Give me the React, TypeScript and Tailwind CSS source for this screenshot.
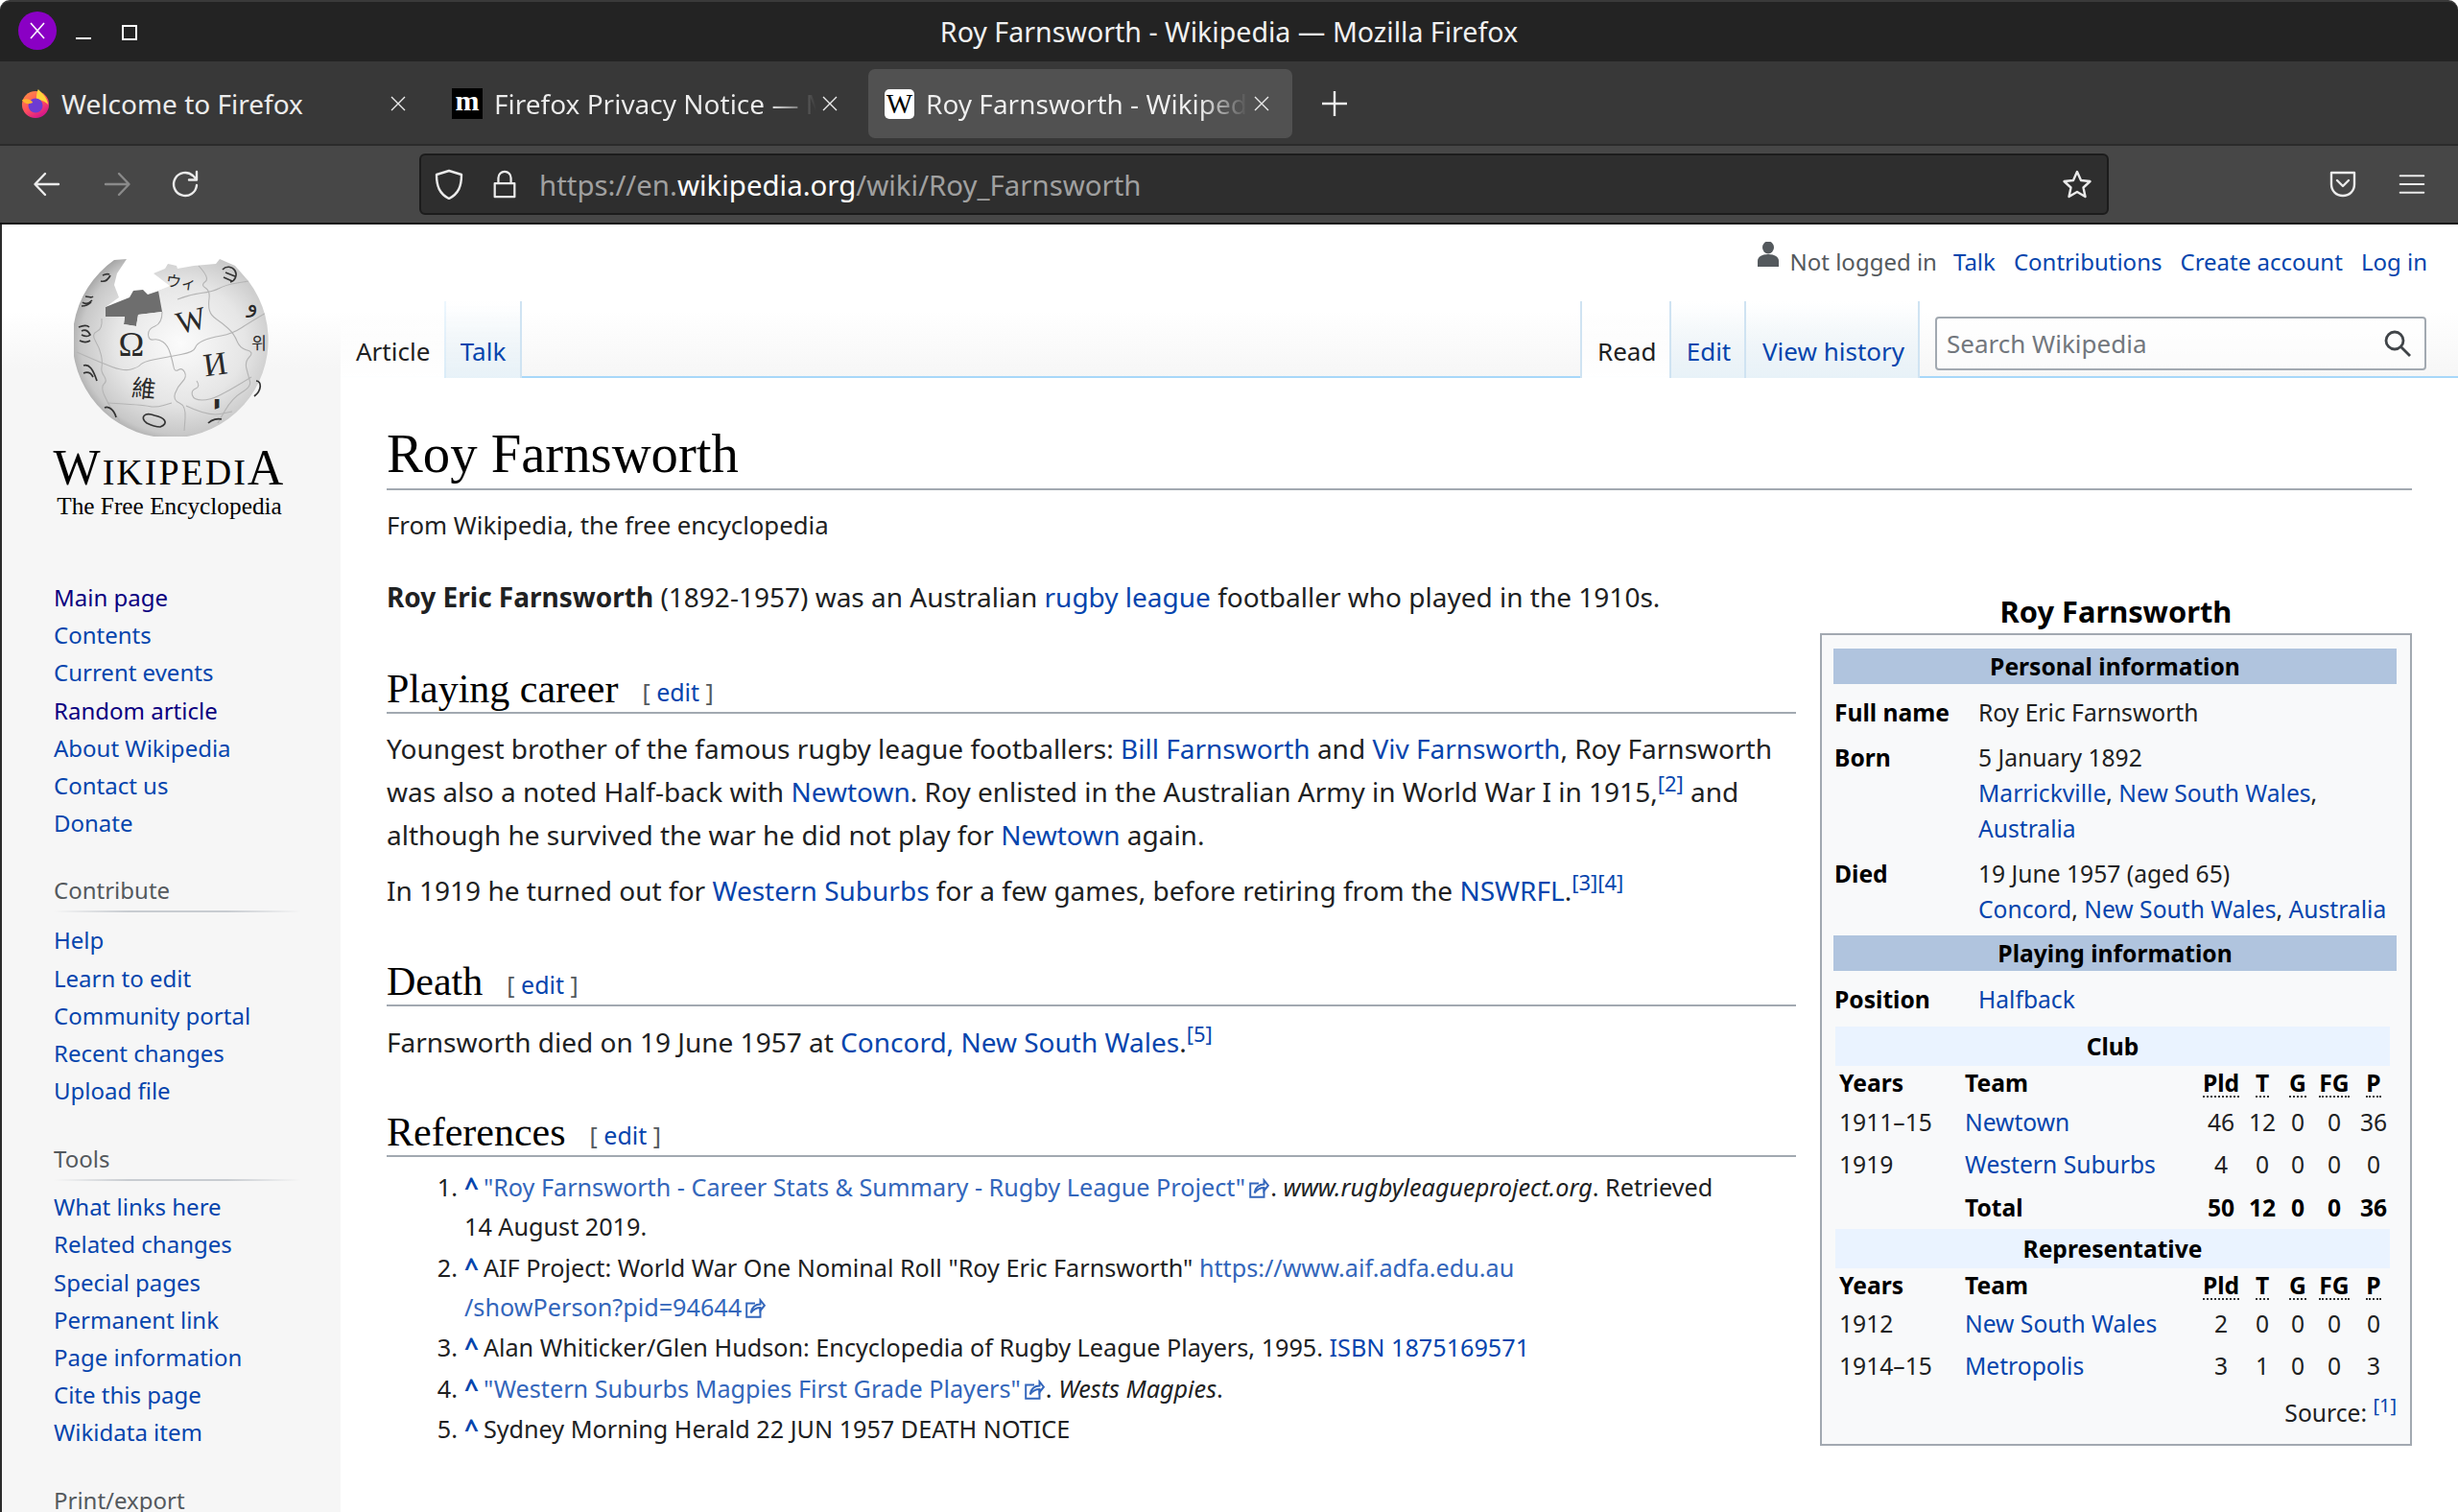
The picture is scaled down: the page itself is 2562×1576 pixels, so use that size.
import type { ReactNode } from "react"

const navA = ["Main page", "Contents", "Current events", "Random article", "About Wikipedia", "Contact us", "Donate"]
const navB = ["Help", "Learn to edit", "Community portal", "Recent changes", "Upload file"]
const navC = ["What links here", "Related changes", "Special pages", "Permanent link", "Page information", "Cite this page", "Wikidata item"]

const visited = ["Main page", "Random article"]

// seams of the puzzle pieces on the globe
const seams: number[][][] = [
  [[92, 56], [92, 68], [77, 74], [78, 86], [88, 84], [98, 91], [103, 108], [105, 119], [113, 114], [118, 124], [108, 134], [103, 148], [117, 154], [115, 180]],
  [[29, 63], [30, 74], [18, 79], [27, 94], [30, 109], [28, 118], [35, 128], [28, 134], [35, 151], [48, 170]],
  [[3, 98], [28, 109], [52, 118], [67, 114], [72, 108], [98, 103], [125, 98], [128, 89], [142, 83], [165, 79], [185, 66], [202, 56]],
  [[108, 43], [120, 38], [145, 35], [158, 28], [182, 24]],
  [[130, 8], [142, 21], [132, 28], [142, 34], [140, 50], [143, 60], [155, 68], [167, 79], [173, 94], [188, 98], [178, 108], [182, 123], [185, 134], [165, 146], [150, 172]],
  [[128, 128], [132, 134], [122, 138], [125, 148], [142, 148], [162, 138], [185, 124]],
  [[35, 151], [72, 153], [85, 156], [102, 151]],
  [[117, 154], [140, 165], [165, 160]],
]

function smooth(pts: number[][]) {
  let d = `M${pts[0][0]} ${pts[0][1]}`
  for (let i = 1; i < pts.length - 1; i++) {
    const mx = (pts[i][0] + pts[i + 1][0]) / 2
    const my = (pts[i][1] + pts[i + 1][1]) / 2
    d += `Q${pts[i][0]} ${pts[i][1]} ${mx} ${my}`
  }
  const last = pts[pts.length - 1]
  return d + `L${last[0]} ${last[1]}`
}

function A({ children }: { children: ReactNode }) {
  return <span className="text-[#0645ad]">{children}</span>
}

function Ext({ children }: { children: ReactNode }) {
  return <span className="text-[#3366bb]">{children}</span>
}

function ExtIcon() {
  return (
    <svg viewBox="0 0 20 20" className="inline-block w-[24px] h-[22px] ml-[2px] align-[-3px]" fill="none" stroke="#3366bb" strokeWidth="1.8">
      <path d="M10 5H2v13h13v-8" />
      <path d="M6 14c1-5 4-8 9-8V2l4 5-4 5V9c-3 0-6 1-9 5z" fill="#fff" />
    </svg>
  )
}

function Heading({ title, mt }: { title: string; mt: string }) {
  return (
    <div className={`${mt} h-[54px] border-b-2 border-[#a2a9b1] flex items-end font-['Liberation_Serif',serif]`}>
      <span className="text-[42px] leading-[48px] text-black">{title}</span>
      <span className="ml-[25px] mb-[-2px] text-[25px] leading-[46px] text-[#54595d] font-['Noto_Sans',sans-serif]">
        [ <A>edit</A> ]
      </span>
    </div>
  )
}

function NavList({ items }: { items: string[] }) {
  return (
    <ul>
      {items.map((t) => (
        <li key={t} className={`h-[39.2px] leading-[39.2px] text-[24px] ${visited.includes(t) ? "text-[#0b0080]" : "text-[#0645ad]"}`}>
          {t}
        </li>
      ))}
    </ul>
  )
}

function NavHead({ title }: { title: string }) {
  return (
    <div className="w-[258px] h-[41px] text-[24px] leading-[36px] text-[#54595d] bg-[linear-gradient(to_right,#c8ccd100,#c8ccd1_30%,#c8ccd1_70%,#c8ccd100)] bg-[length:100%_2px] bg-no-repeat bg-bottom">
      {title}
    </div>
  )
}

function Globe() {
  const outline =
    "M152 1L168 8L182 24A102 102 0 1 1 42 2L55 1L45 16L42 28L47 41L33 51L33 61L53 61L52 69L65 71L67 59L92 56L88 34L100 29L83 16L95 11L98 6L107 8L108 11L125 8L148 6Z"
  return (
    <svg viewBox="0 0 204 186" className="w-[204px] h-[186px] block">
      <defs>
        <radialGradient id="sphere" cx="0.55" cy="0.47" r="0.6">
          <stop offset="0" stopColor="#fbfbfb" />
          <stop offset="0.55" stopColor="#e6e6e6" />
          <stop offset="0.85" stopColor="#c8c8c8" />
          <stop offset="1" stopColor="#969696" />
        </radialGradient>
        <clipPath id="ball">
          <path d={outline} />
        </clipPath>
      </defs>
      <path d="M33 51L58 41L62 34L72 33L77 38L98 31L100 36L92 56L67 59L65 71L52 69L53 61L33 61Z" fill="#6e6e6e" />
      <path d={outline} fill="url(#sphere)" />
      <g clipPath="url(#ball)" fill="none" stroke="#b4b4b4" strokeWidth="1.1">
        {seams.map((s, i) => (
          <path key={i} d={smooth(s)} />
        ))}
      </g>
      <g fill="#2a2a2a">
        <text x="60" y="102" textAnchor="middle" className="font-['Liberation_Serif',serif]" fontSize="36">Ω</text>
        <text x="122" y="76" textAnchor="middle" transform="rotate(-14 122 64)" className="font-['Liberation_Serif',serif]" fontSize="33">W</text>
        <text x="147" y="122" textAnchor="middle" transform="rotate(-8 147 108)" className="font-['Liberation_Serif',serif]" fontSize="34">И</text>
        <text x="73" y="145" textAnchor="middle" transform="rotate(6 73 134)" className="font-['Noto_Sans_CJK_TC',sans-serif]" fontSize="25">維</text>
        <text x="112" y="31" textAnchor="middle" transform="rotate(8 112 24)" className="font-['Noto_Sans_CJK_JP',sans-serif]" fontSize="16">ウィ</text>
        <text x="193" y="95" textAnchor="middle" className="font-['Noto_Sans_CJK_KR',sans-serif]" fontSize="17">위</text>
        <text x="186" y="56" textAnchor="middle" className="font-['DejaVu_Sans',sans-serif]" fontSize="24">و</text>
        <text x="149" y="162" textAnchor="middle" className="font-['DejaVu_Sans',sans-serif]" fontWeight="700" fontSize="28">י</text>
      </g>
      <g fill="none" stroke="#333" strokeWidth="1.7">
        <path d="M155 12a8 8 0 1 1 8 13M158 15l10 4M156 20l9 4" />
        <path d="M38 18c-3 6-6 7-10 6M30 18c4-2 5-2 7-1" />
        <path d="M19 44c-4 4-8 4-10 2M12 40c4 0 6 2 8 0M8 50c4 0 8-2 10-4" />
        <path d="M5 72c5-2 9-2 11 0M8 80c4 2 7 2 9 0c-2-4-5-6-9-4M6 86c4 2 8 2 11 0" />
        <path d="M10 112c6-2 10 4 14 16M10 120c5-2 8 0 10 4" />
        <path d="M76 172c-8-6-2-12 8-8c10 2 16 8 6 12c-6 0-10-2-14-4z" />
        <path d="M32 156c4-2 10 2 12 10" />
        <path d="M190 128c6 0 6 10-2 16" />
        <path d="M140 172c4-4 10-5 14-4" />
      </g>
    </svg>
  )
}

function FirefoxIcon() {
  return (
    <svg viewBox="0 0 32 32" className="w-[30px] h-[32px]">
      <defs>
        <linearGradient id="ff" x1="0" y1="0" x2="0.6" y2="1">
          <stop offset="0" stopColor="#ff9640" />
          <stop offset="0.6" stopColor="#ff4f5e" />
          <stop offset="1" stopColor="#d6168c" />
        </linearGradient>
      </defs>
      <circle cx="16" cy="17" r="15" fill="url(#ff)" />
      <path d="M19 0c4 4 10 9 11 17c-3-3-9-6-13-4c0-5 0-9 2-13z" fill="#ffd43a" />
      <circle cx="16" cy="18" r="8" fill="#6d3bd2" />
      <path d="M1 12c5-2 10-1 12 3c-4 2-9 2-12-3z" fill="#ffb42e" />
    </svg>
  )
}

function ChromeIcon({ children, cls }: { children: ReactNode; cls: string }) {
  return (
    <svg viewBox="0 0 32 32" className={cls} fill="none" stroke="currentColor" strokeWidth="2.4" strokeLinecap="round" strokeLinejoin="round">
      {children}
    </svg>
  )
}

function SubHead({ title }: { title: string }) {
  return (
    <div className="w-[578px] ml-[2px] h-[41px] leading-[41px] bg-[#eaf3ff] text-center font-bold text-black">{title}</div>
  )
}

const statCols = "grid grid-cols-[131px_243px_54px_32px_42px_34px_48px] ml-[3px] w-[584px]"

function StatHead() {
  return (
    <div className={`${statCols} h-[36px] leading-[36px] font-bold text-black`}>
      <div className="pl-[3px]">Years</div>
      <div className="pl-[3px]">Team</div>
      {["Pld", "T", "G", "FG", "P"].map((h) => (
        <div key={h} className="text-center">
          <span className="inline-block leading-[26px] border-b-2 border-dotted border-[#333]">{h}</span>
        </div>
      ))}
    </div>
  )
}

function StatRow({ cells, h, bold }: { cells: string[]; h: string; bold?: boolean }) {
  return (
    <div className={`${statCols} ${h} items-center ${bold ? "font-bold text-black" : "text-[#202122]"}`}>
      <div className="pl-[3px]">{cells[0]}</div>
      <div className="pl-[3px] whitespace-nowrap">{bold ? cells[1] : <A>{cells[1]}</A>}</div>
      {cells.slice(2).map((c, i) => (
        <div key={i} className="text-center">{c}</div>
      ))}
    </div>
  )
}

function Caret() {
  return <span className="font-bold text-[#0645ad] mr-[5px] text-[26px] leading-none">^</span>
}

function Ref({ n, children }: { n: number; children: ReactNode }) {
  return (
    <li className="flex mb-[1.5px]">
      <span className="w-[74px] text-right shrink-0 pr-0">{n}.</span>
      <div className="ml-[7px]">{children}</div>
    </li>
  )
}

export default function App() {
  return (
    <div className="w-[2562px] h-[1576px] overflow-hidden flex flex-col bg-white font-['Noto_Sans',sans-serif] text-[#202122]">
      {/* window title */}
      <div className="h-[64px] shrink-0 bg-[#232323] border-t-2 border-[#3a3a3a] rounded-t-[10px] relative flex items-center">
        <div className="ml-[19px] mt-[-2px] w-[40px] h-[40px] rounded-full bg-[#8a00c4] flex items-center justify-center">
          <svg viewBox="0 0 20 20" className="w-[20px] h-[20px]" stroke="#fff" strokeWidth="1.6"><path d="M3 2l14 16M17 2L3 18" /></svg>
        </div>
        <div className="ml-[20px] mt-[14px] w-[16px] h-[2px] bg-white" />
        <div className="ml-[32px] mt-[2px] w-[16px] h-[16px] border-2 border-white" />
        <div className="absolute inset-x-0 top-0 h-full flex items-center justify-center text-[28.6px] text-[#f1f1f1]">
          Roy Farnsworth - Wikipedia — Mozilla Firefox
        </div>
      </div>

      {/* tabs */}
      <div className="h-[88px] shrink-0 pt-[2px] bg-[#383838] border-b-2 border-[#2b2b2b] flex items-center text-[28px] text-[#ececec]">
        <div className="w-[450px] h-[72px] pl-[22px] pr-[27px] flex items-center">
          <FirefoxIcon />
          <span className="ml-[12px] flex-1">Welcome to Firefox</span>
          <svg viewBox="0 0 16 16" className="w-[16px] h-[16px]" stroke="#ececec" strokeWidth="1.4"><path d="M1 1l14 14M15 1L1 15" /></svg>
        </div>
        <div className="w-[444px] h-[72px] pl-[21px] pr-[21px] flex items-center">
          <div className="w-[32px] h-[32px] bg-black text-white flex items-center justify-center font-['Liberation_Serif',serif] font-bold text-[30px] leading-none pb-[6px]">m</div>
          <span className="ml-[12px] w-[336px] overflow-hidden whitespace-nowrap bg-[linear-gradient(to_right,#ececec_85%,#38383800)] bg-clip-text text-transparent">Firefox Privacy Notice — Mozilla</span>
          <svg viewBox="0 0 16 16" className="ml-[6px] w-[16px] h-[16px]" stroke="#ececec" strokeWidth="1.4"><path d="M1 1l14 14M15 1L1 15" /></svg>
        </div>
        <div className="ml-[11px] w-[442px] h-[72px] pl-[17px] pr-[22px] rounded-[7px] bg-[#515151] flex items-center">
          <div className="w-[31px] h-[31px] rounded-[5px] bg-white text-black flex items-center justify-center font-['Liberation_Serif',serif] text-[29px] leading-none">W</div>
          <span className="ml-[12px] w-[336px] overflow-hidden whitespace-nowrap bg-[linear-gradient(to_right,#f0f0f0_85%,#51515100)] bg-clip-text text-transparent">Roy Farnsworth - Wikipedia</span>
          <svg viewBox="0 0 16 16" className="ml-[6px] w-[16px] h-[16px]" stroke="#ececec" strokeWidth="1.4"><path d="M1 1l14 14M15 1L1 15" /></svg>
        </div>
        <svg viewBox="0 0 24 24" className="ml-[31px] w-[26px] h-[26px]" stroke="#f0f0f0" strokeWidth="2.2"><path d="M12 0v24M0 12h24" /></svg>
      </div>

      {/* toolbar */}
      <div className="h-[82px] shrink-0 bg-[#474747] border-b-2 border-[#111] flex items-center text-[#ebebeb]">
        <ChromeIcon cls="ml-[33px] w-[32px] h-[32px]">
          <path d="M28 16H4M14 5L3.500 16L14 27" />
        </ChromeIcon>
        <ChromeIcon cls="ml-[41px] w-[32px] h-[32px] text-[#8a8a8a]">
          <path d="M4 16h24M18 5l10.500 11L18 27" />
        </ChromeIcon>
        <ChromeIcon cls="ml-[40px] w-[32px] h-[32px]">
          <path d="M27 17a12 12 0 1 1-4-10l4 4M27 3v8.500h-8" />
        </ChromeIcon>
        <div className="ml-[227px] w-[1761px] h-[64px] rounded-[6px] bg-[#2e2e2e] border-2 border-[#1c1c1c] flex items-center">
          <ChromeIcon cls="ml-[13px] w-[32px] h-[32px]">
            <path d="M16 2l13 4c0 12-3 20-13 25C6 26 3 18 3 6z" />
          </ChromeIcon>
          <ChromeIcon cls="ml-[27px] w-[30px] h-[32px]">
            <path d="M9 15V9a7 7 0 0 1 14 0v6M5 15h22v15H5z" />
          </ChromeIcon>
          <div className="ml-[21px] pt-[2px] flex-1 text-[29.4px] text-[#a0a0a0]">
            https://en.<span className="text-white">wikipedia.org</span>/wiki/Roy_Farnsworth
          </div>
          <ChromeIcon cls="mr-[15px] w-[32px] h-[32px]">
            <path d="M16 3l4 9 9.500 1-7 6.500L24.500 29 16 24l-8.500 5 2-9.500-7-6.500 9.500-1z" />
          </ChromeIcon>
        </div>
        <ChromeIcon cls="ml-[228px] w-[32px] h-[32px]">
          <path d="M4 4h24v12c0 7-5 12-12 12S4 23 4 16zM10 12l6 6 6-6" />
        </ChromeIcon>
        <ChromeIcon cls="ml-[42px] w-[28px] h-[28px]">
          <path d="M2 6h28M2 16h28M2 26h28" />
        </ChromeIcon>
      </div>

      {/* page */}
      <div className="flex-1 flex min-h-0 border-l-2 border-[#2b2b2b] relative">
        {/* sidebar */}
        <aside className="w-[353px] shrink-0 bg-[linear-gradient(to_bottom,#ffffff_90px,#f6f6f6_150px)] pl-[54px] overflow-hidden">
          <div className="ml-[-54px] h-[306px] w-[353px] flex flex-col items-center">
            <div className="mt-[35px] self-start pl-[75px]"><Globe /></div>
            <div className="mt-[7px] ml-[-4px] font-['Liberation_Serif',serif] text-black leading-none whitespace-nowrap text-[38px] tracking-[2px]">
              <span className="text-[52px]">W</span>IKIPEDI<span className="text-[52px]">A</span>
            </div>
            <div className="mt-[-2px] ml-[-4px] font-['Liberation_Serif',serif] text-black text-[25.3px] leading-[30px] whitespace-nowrap">The Free Encyclopedia</div>
          </div>
          <div className="mt-[-4px]">
            <div className="h-[67px]" />
            <NavList items={navA} />
            <div className="mt-[33px]"><NavHead title="Contribute" /></div>
            <div className="mt-[9px]"><NavList items={navB} /></div>
            <div className="mt-[34px]"><NavHead title="Tools" /></div>
            <div className="mt-[7px]"><NavList items={navC} /></div>
            <div className="mt-[33px] text-[24px] leading-[36px] text-[#54595d]">Print/export</div>
          </div>
        </aside>

        {/* main */}
        <main className="flex-1 min-w-0 flex flex-col">
          <div className="h-[160px] shrink-0 bg-[linear-gradient(to_bottom,#ffffff_90px,#f6f6f6)] flex flex-col">
            <div className="pt-[21px] pr-[32px] flex justify-end items-center text-[24px] leading-[36px] text-[#0645ad] gap-[19px]">
              <div className="flex items-center text-[#54595d] mr-[-2px]">
                <svg viewBox="0 0 24 26" className="w-[24px] h-[26px] mt-[-16px] mr-[11px]" fill="#54595d">
                  <ellipse cx="12" cy="6" rx="6" ry="6.500" />
                  <path d="M1 26v-6c0-4 4-7 11-7s11 3 11 7v6z" />
                </svg>
                Not logged in
              </div>
              <span>Talk</span>
              <span>Contributions</span>
              <span>Create account</span>
              <span>Log in</span>
            </div>
            <div className="mt-auto h-[80px] border-b-2 border-[#a7d7f9] flex justify-between text-[26px]">
              <div className="flex h-[80px]">
                <div className="w-[108px] pl-[16px] pt-[32px] leading-[40px] text-[#202122] bg-[linear-gradient(to_bottom,#ffffff00,#ffffff)]">Article</div>
                <div className="w-[81px] text-center pt-[32px] leading-[40px] text-[#0645ad] border-x-2 border-[#a7d7f933] border-r-[#cfe3f2] bg-[linear-gradient(to_bottom,#ffffff00,#e8f2f8)]">Talk</div>
              </div>
              <div className="flex h-[80px]">
                <div className="w-[93px] pl-[16px] pt-[32px] leading-[40px] text-[#202122] bg-[linear-gradient(to_bottom,#ffffff00,#ffffff)] border-l-2 border-[#cfe3f2]">Read</div>
                <div className="w-[80px] text-center pl-[2px] pt-[32px] leading-[40px] text-[#0645ad] border-x-2 border-[#cfe3f2] bg-[linear-gradient(to_bottom,#ffffff00,#e8f2f8)]">Edit</div>
                <div className="w-[181px] text-center pl-[3px] pt-[32px] leading-[40px] text-[#0645ad] border-r-2 border-[#cfe3f2] bg-[linear-gradient(to_bottom,#ffffff00,#e8f2f8)]">View history</div>
                <div className="ml-[16px] mr-[33px] mt-[16px] w-[512px] h-[56px] rounded-[4px] border-2 border-[#a2a9b1] bg-white/50 flex items-center pl-[10px] pr-[14px] text-[#72777d]">
                  <span className="flex-1">Search Wikipedia</span>
                  <svg viewBox="0 0 28 28" className="w-[28px] h-[28px]" fill="none" stroke="#404448" strokeWidth="2.8">
                    <circle cx="11" cy="11" r="9" />
                    <path d="M17 17l10 10" />
                  </svg>
                </div>
              </div>
            </div>
          </div>

          <div className="flex-1 min-h-0 pl-[48px] pr-[48px] pt-[36px] overflow-hidden">
            <h1 className="h-[81px] pt-[7px] border-b-2 border-[#a2a9b1] font-['Liberation_Serif',serif] text-[56.7px] leading-[72px] text-black">Roy Farnsworth</h1>
            <div className="mt-[18px] text-[25.76px] leading-[36px] text-[#202122]">From Wikipedia, the free encyclopedia</div>

            <div className="mt-[15px] flex gap-[25px] items-start">
              <div className="flex-1 min-w-0 pt-[20px] text-[28px] leading-[45px]">
                <p>
                  <b>Roy Eric Farnsworth</b> (1892-1957) was an Australian <A>rugby league</A> footballer who played in the 1910s.
                </p>

                <Heading title="Playing career" mt="mt-[45px]" />
                <p className="mt-[14px]">
                  Youngest brother of the famous rugby league footballers: <A>Bill Farnsworth</A> and <A>Viv Farnsworth</A>, Roy Farnsworth was also a noted Half-back with <A>Newtown</A>. Roy enlisted in the Australian Army in World War I in 1915,<sup className="text-[22px] leading-none"><A>[2]</A></sup> and although he survived the war he did not play for <A>Newtown</A> again.
                </p>
                <p className="mt-[13px]">
                  In 1919 he turned out for <A>Western Suburbs</A> for a few games, before retiring from the <A>NSWRFL</A>.<sup className="text-[22px] leading-none"><A>[3]</A><A>[4]</A></sup>
                </p>

                <Heading title="Death" mt="mt-[44px]" />
                <p className="mt-[15px]">
                  Farnsworth died on 19 June 1957 at <A>Concord, New South Wales</A>.<sup className="text-[22px] leading-none"><A>[5]</A></sup>
                </p>

                <Heading title="References" mt="mt-[43px]" />
                <ol className="mt-[11px] text-[25.2px] leading-[41px]">
                  <Ref n={1}>
                    <Caret /><Ext>"Roy Farnsworth - Career Stats &amp; Summary - Rugby League Project"</Ext><ExtIcon />. <i>www.rugbyleagueproject.org</i>. Retrieved 14&nbsp;August&nbsp;2019.
                  </Ref>
                  <Ref n={2}>
                    <Caret />AIF Project: World War One Nominal Roll "Roy Eric Farnsworth" <Ext>https://www.aif.adfa.edu.au<br />/showPerson?pid=94644</Ext><ExtIcon />
                  </Ref>
                  <Ref n={3}>
                    <Caret />Alan Whiticker/Glen Hudson: Encyclopedia of Rugby League Players, 1995. <A>ISBN 1875169571</A>
                  </Ref>
                  <Ref n={4}>
                    <Caret /><Ext>"Western Suburbs Magpies First Grade Players"</Ext><ExtIcon />. <i>Wests Magpies</i>.
                  </Ref>
                  <Ref n={5}>
                    <Caret />Sydney Morning Herald 22 JUN 1957 DEATH NOTICE
                  </Ref>
                </ol>
              </div>

              {/* infobox */}
              <div className="w-[617px] shrink-0 pt-[36px] text-[24.64px] leading-[37px]">
                <div className="h-[44px] leading-[42px] text-center font-bold text-[30.8px] text-black">Roy Farnsworth</div>
                <div className="border-2 border-[#a2a9b1] bg-[#f8f9fa] h-[847px] pl-[12px] pt-[14px] text-[#202122]">
                  <div className="w-[587px] h-[37px] bg-[#b0c4de] text-center font-bold text-black">Personal information</div>
                  <div className="mt-[11px] flex">
                    <div className="w-[151px] pl-[1px] font-bold text-black">Full name</div>
                    <div>Roy Eric Farnsworth</div>
                  </div>
                  <div className="mt-[10px] flex">
                    <div className="w-[151px] pl-[1px] font-bold text-black">Born</div>
                    <div>
                      5 January 1892<br />
                      <A>Marrickville</A>, <A>New South Wales</A>,<br />
                      <A>Australia</A>
                    </div>
                  </div>
                  <div className="mt-[10px] flex">
                    <div className="w-[151px] pl-[1px] font-bold text-black">Died</div>
                    <div>
                      19 June 1957 (aged 65)<br />
                      <A>Concord</A>, <A>New South Wales</A>, <A>Australia</A>
                    </div>
                  </div>
                  <div className="mt-[9px] w-[587px] h-[37px] bg-[#b0c4de] text-center font-bold text-black">Playing information</div>
                  <div className="mt-[11px] flex">
                    <div className="w-[151px] pl-[1px] font-bold text-black">Position</div>
                    <div><A>Halfback</A></div>
                  </div>
                  <div className="mt-[10px]">
                    <SubHead title="Club" />
                    <StatHead />
                    <StatRow h="h-[44px]" cells={["1911–15", "Newtown", "46", "12", "0", "0", "36"]} />
                    <StatRow h="h-[45px]" cells={["1919", "Western Suburbs", "4", "0", "0", "0", "0"]} />
                    <StatRow h="h-[45px]" bold cells={["", "Total", "50", "12", "0", "0", "36"]} />
                    <SubHead title="Representative" />
                    <StatHead />
                    <StatRow h="h-[42px]" cells={["1912", "New South Wales", "2", "0", "0", "0", "0"]} />
                    <StatRow h="h-[46px]" cells={["1914–15", "Metropolis", "3", "1", "0", "0", "3"]} />
                    <div className="mt-[8px] w-[587px] text-right">
                      Source: <sup className="text-[20px] leading-none"><A>[1]</A></sup>
                    </div>
                  </div>
                </div>
              </div>
            </div>
          </div>
        </main>
      </div>
    </div>
  )
}
